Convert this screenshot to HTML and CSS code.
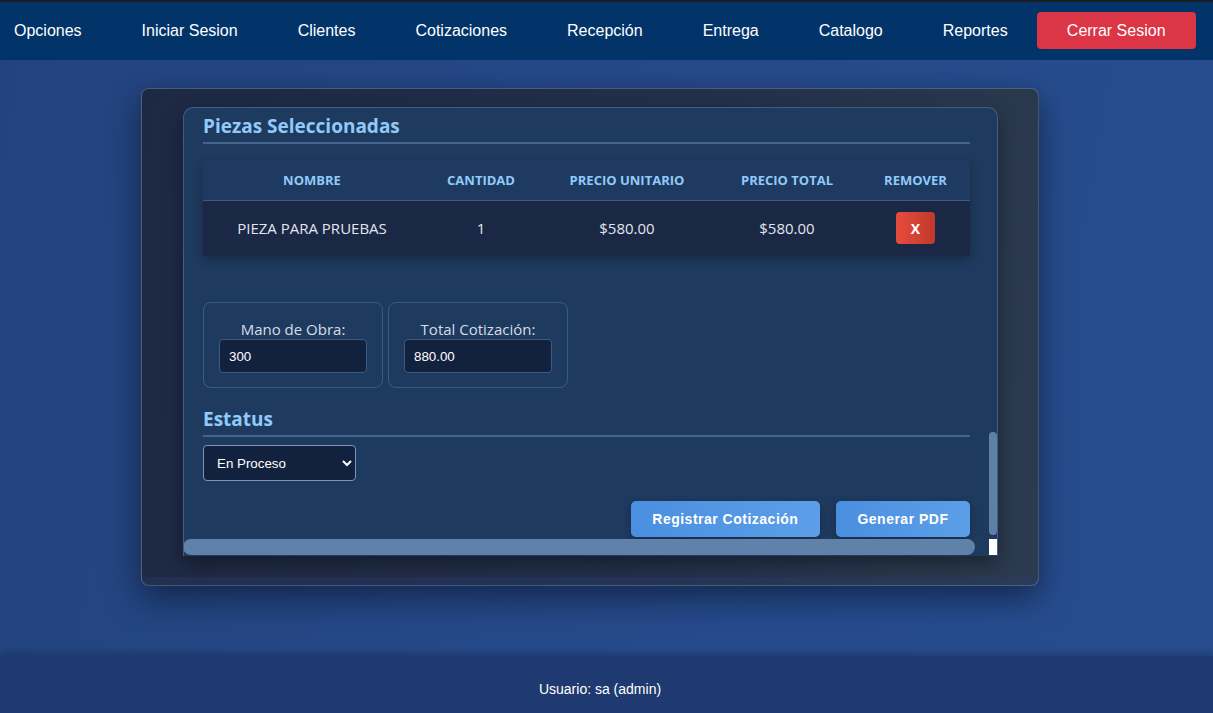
FILE: index.html
```html
<!DOCTYPE html>
<html lang="es">
<head>
<meta charset="utf-8">
<title>Cotización</title>
<link rel="stylesheet" href="styles.css">
</head>
<body>
<header class="topbar">
  <nav class="nav">
    <div class="nav-links">
      <a class="nav-link" href="#">Opciones</a>
      <a class="nav-link" href="#">Iniciar Sesion</a>
      <a class="nav-link" href="#">Clientes</a>
      <a class="nav-link" href="#">Cotizaciones</a>
      <a class="nav-link" href="#">Recepción</a>
      <a class="nav-link" href="#">Entrega</a>
      <a class="nav-link" href="#">Catalogo</a>
      <a class="nav-link" href="#">Reportes</a>
    </div>
    <button class="logout">Cerrar Sesion</button>
  </nav>
</header>

<main class="main">
  <section class="outer-card">
    <div class="inner-card">
      <div class="content">
        <h3 class="section-title">Piezas Seleccionadas</h3>
        <table class="parts">
          <colgroup>
            <col class="c1"><col class="c2"><col class="c3"><col class="c4"><col class="c5">
          </colgroup>
          <thead>
            <tr><th>Nombre</th><th>Cantidad</th><th>Precio Unitario</th><th>Precio Total</th><th>Remover</th></tr>
          </thead>
          <tbody>
            <tr>
              <td>PIEZA PARA PRUEBAS</td>
              <td>1</td>
              <td>$580.00</td>
              <td>$580.00</td>
              <td><button class="remove">X</button></td>
            </tr>
          </tbody>
        </table>

        <div class="totals">
          <div class="total-box">
            <label class="total-label">Mano de Obra:</label>
            <input class="total-input" type="text" value="300">
          </div>
          <div class="total-box">
            <label class="total-label">Total Cotización:</label>
            <input class="total-input" type="text" value="880.00">
          </div>
        </div>

        <h3 class="section-title status-title">Estatus</h3>
        <select class="status-select">
          <option>En Proceso</option>
        </select>

        <div class="actions">
          <button class="action">Registrar Cotización</button>
          <button class="action">Generar PDF</button>
        </div>
      </div>
      <div class="vscroll"><div class="vthumb"></div></div>
      <div class="hscroll"><div class="hthumb"></div></div>
      <div class="corner"></div>
    </div>
  </section>
</main>

<footer class="footer">Usuario: sa (admin)</footer>
</body>
</html>
```

FILE: styles.css
```css
* { box-sizing: border-box; }

html, body {
  margin: 0;
  height: 100%;
}

body {
  display: flex;
  flex-direction: column;
  min-height: 713px;
  background: linear-gradient(100deg, #22437d 0%, #26498a 50%, #274d8f 100%);
  font-family: "Open Sans", "Noto Sans", sans-serif;
  color: #e6ebf2;
  border-top: 2px solid #1b1d22;
}

/* Top navigation */
.topbar {
  background: #02346a;
  height: 58px;
  flex: none;
}

.nav {
  display: flex;
  align-items: center;
  height: 100%;
  padding-left: 14px;
  gap: 29px;
}

.nav-links {
  display: flex;
  gap: 60px;
}

.nav-link {
  font-family: "Liberation Sans", Arial, sans-serif;
  font-size: 16px;
  color: #ffffff;
  text-decoration: none;
}

.logout {
  font-family: "Liberation Sans", Arial, sans-serif;
  font-size: 16px;
  color: #ffffff;
  background: #dc3545;
  border: none;
  border-radius: 4px;
  width: 159px;
  height: 37px;
  margin-top: -1px;
}

/* Main */
.main {
  flex: 1;
  padding: 28px 0 0 141px;
}

.outer-card {
  width: 898px;
  height: 498px;
  border: 1px solid rgba(150, 170, 200, 0.35);
  border-radius: 8px;
  background:
    linear-gradient(180deg, transparent 0, transparent 488px, rgba(40, 60, 110, 0.35) 488px),
    linear-gradient(100deg, #1d2843 0%, #23304a 60%, #2c3b4f 100%);
  box-shadow: 0 12px 32px rgba(5, 12, 30, 0.55);
  padding: 18px 0 0 41px;
}

.inner-card {
  width: 815px;
  height: 449px;
  border: 1px solid rgba(100, 140, 190, 0.45);
  border-bottom: none;
  border-radius: 10px 10px 0 0;
  background: #1f3a5f;
  display: grid;
  grid-template-columns: 804px 9px;
  grid-template-rows: 431px 17px;
  overflow: hidden;
  box-shadow: 0 8px 18px rgba(0, 0, 0, 0.35);
}

.content {
  overflow: hidden;
  padding: 5px 18px 0 19px;
}

.section-title {
  margin: 0;
  font-size: 19px;
  line-height: 26px;
  font-weight: 700;
  color: #90caf9;
  padding-bottom: 3px;
  border-bottom: 2px solid #44648d;
}

/* Table */
.parts {
  margin-top: 16px;
  width: 767px;
  border-collapse: collapse;
  table-layout: fixed;
  box-shadow: 0 4px 10px rgba(0, 0, 0, 0.25);
}

.c1 { width: 218px; }
.c2 { width: 120px; }
.c3 { width: 172px; }
.c4 { width: 148px; }
.c5 { width: 109px; }

.parts th {
  height: 40px;
  padding: 0;
  font-size: 13px;
  font-weight: 700;
  text-transform: uppercase;
  color: #90caf9;
  background: #1f3a60;
  border-bottom: 1px solid #3a5b86;
  text-align: center;
}

.parts td {
  height: 56px;
  padding: 0;
  font-size: 15px;
  color: #e2e6ec;
  background: #1a2745;
  text-align: center;
}

.remove {
  width: 39px;
  height: 32px;
  border: none;
  border-radius: 4px;
  background: linear-gradient(90deg, #e74c3c, #c0392b);
  color: #ffffff;
  font-family: "Open Sans", sans-serif;
  font-weight: 700;
  font-size: 14px;
}

/* Totals */
.totals {
  display: flex;
  gap: 5px;
  margin-top: 46px;
}

.total-box {
  width: 180px;
  height: 86px;
  border: 1px solid rgba(100, 140, 190, 0.4);
  border-radius: 8px;
  padding: 16px 15px 0;
  display: flex;
  flex-direction: column;
  align-items: center;
}

.total-label {
  font-size: 15px;
  line-height: 20px;
  color: #d6dde6;
}

.total-input {
  width: 148px;
  height: 34px;
  background: #12213e;
  border: 1px solid #3e5b82;
  border-radius: 4px;
  color: #ffffff;
  font-family: "Liberation Sans", Arial, sans-serif;
  font-size: 13.33px;
  padding: 0 9px;
}

/* Status */
.status-title {
  margin-top: 18px;
  padding-bottom: 3px;
}

.status-select {
  display: block;
  margin-top: 8px;
  width: 153px;
  height: 36px;
  background: #12213e;
  border: 1px solid #7a95bb;
  border-radius: 4px;
  color: #ffffff;
  font-family: "Liberation Sans", Arial, sans-serif;
  font-size: 13.33px;
  padding: 0 9px;
  color-scheme: dark;
}

/* Actions */
.actions {
  display: flex;
  justify-content: flex-end;
  gap: 16px;
  margin-top: 20px;
}

.action {
  height: 36px;
  padding: 0 21.5px;
  border: none;
  border-radius: 5px;
  background: linear-gradient(90deg, #4a8fe0, #5c9ee8);
  color: #ffffff;
  font-family: "Liberation Sans", Arial, sans-serif;
  font-weight: 700;
  font-size: 14px;
  letter-spacing: 0.5px;
  box-shadow: 0 3px 8px rgba(0, 0, 0, 0.25);
}

/* Fake scrollbars */
.vscroll {
  padding-top: 324px;
  padding-left: 1px;
}

.vthumb {
  width: 8px;
  height: 103px;
  border-radius: 4px;
  background: #5f7fa6;
}

.hscroll {
  margin-left: -1px;
}

.hthumb {
  width: 792px;
  height: 16px;
  border-radius: 8px;
  background: #6081a9;
}

.corner {
  background: #ffffff;
  width: 8px;
  height: 16px;
  margin-left: 1px;
}

/* Footer */
.footer {
  flex: none;
  height: 57px;
  background: #1f3a70;
  box-shadow: 0 -3px 6px rgba(10, 20, 40, 0.25);
  font-family: "Liberation Sans", Arial, sans-serif;
  font-size: 14px;
  color: #ffffff;
  text-align: center;
  padding-top: 25px;
  padding-right: 13px;
}
```
